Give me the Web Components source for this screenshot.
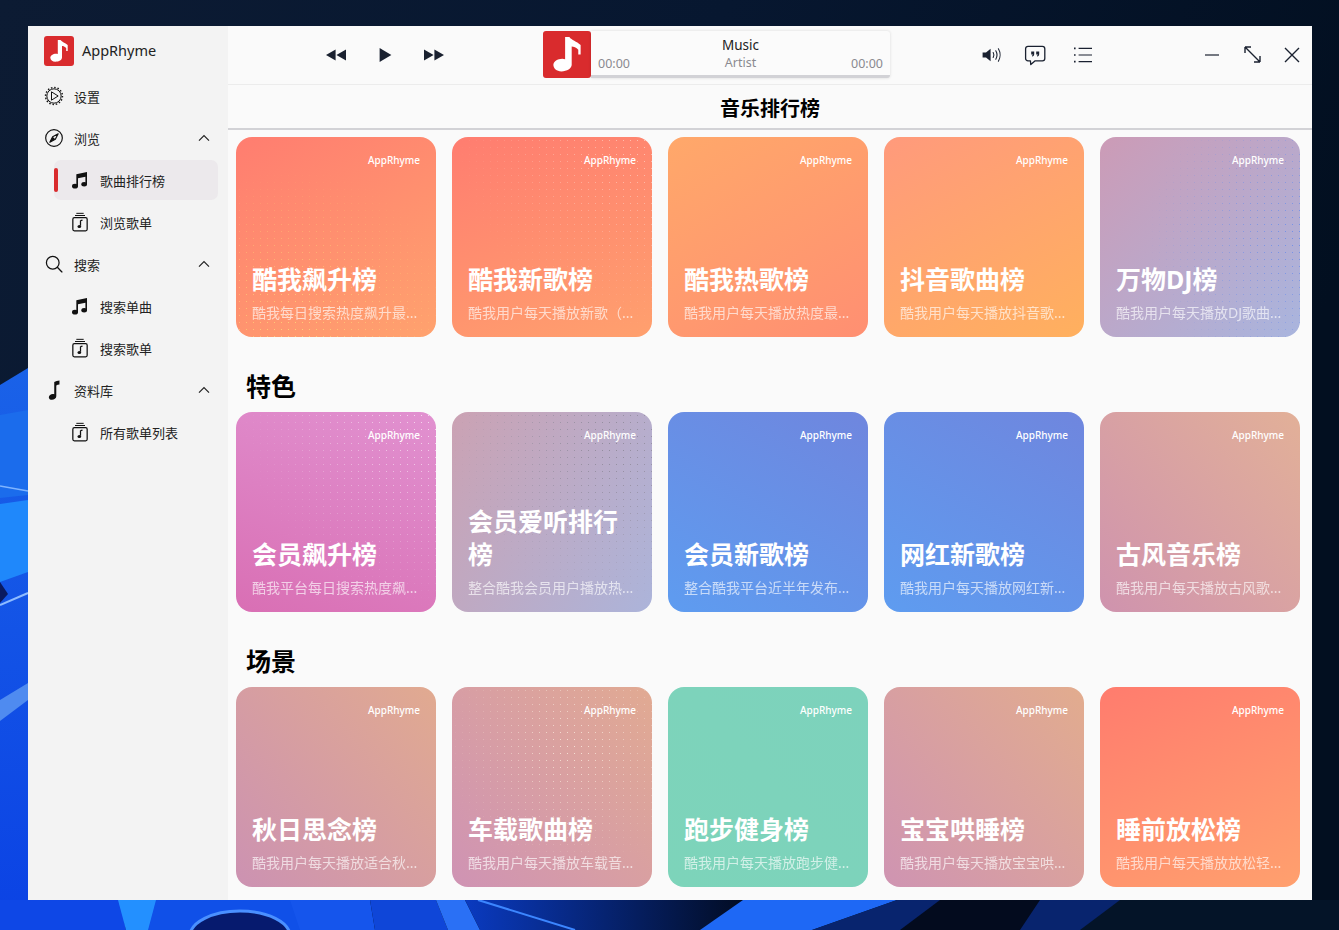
<!DOCTYPE html>
<html lang="zh">
<head>
<meta charset="utf-8">
<title>AppRhyme</title>
<style>
  html, body { margin: 0; height: 100%; }
  body {
    box-sizing: border-box;
    height: 930px;
    overflow: hidden;
    padding: 26px 27px 30px 28px;
    background: #0b1a32;
    font-family: "Noto Sans", "Noto Sans CJK SC", sans-serif;
  }
</style>
</head>
<body>
<desktop-wall></desktop-wall>
<app-window>
  <side-bar slot="side">
    <nav-item icon="gear">设置</nav-item>
    <nav-item icon="compass" chevron>浏览</nav-item>
    <nav-item icon="notes" sub active>歌曲排行榜</nav-item>
    <nav-item icon="playlist" sub>浏览歌单</nav-item>
    <nav-item icon="search" chevron>搜索</nav-item>
    <nav-item icon="notes" sub>搜索单曲</nav-item>
    <nav-item icon="playlist" sub>搜索歌单</nav-item>
    <nav-item icon="note" chevron>资料库</nav-item>
    <nav-item icon="playlist" sub>所有歌单列表</nav-item>
  </side-bar>
  <top-bar slot="top"></top-bar>
  <chart-page slot="main" heading="音乐排行榜">
    <chart-row>
      <chart-card from="#ff7d70" to="#ffa26e" angle="150" name="酷我飙升榜" desc="酷我每日搜索热度飙升最..." dot="#ffd27a" dotat="30% 100%"></chart-card>
      <chart-card from="#ff7d70" to="#ffa06e" angle="160" name="酷我新歌榜" desc="酷我用户每天播放新歌（..." dot="#ffc4b4" dotat="100% 0%"></chart-card>
      <chart-card from="#ffa86a" to="#ff8f72" angle="150" name="酷我热歌榜" desc="酷我用户每天播放热度最..."></chart-card>
      <chart-card from="#ff9a7c" to="#ffb05e" angle="150" name="抖音歌曲榜" desc="酷我用户每天播放抖音歌..."></chart-card>
      <chart-card from="#cc9bb6" to="#a9b5de" angle="135" name="万物DJ榜" desc="酷我用户每天播放DJ歌曲..." dot="#6f8fe8" dotat="100% 50%"></chart-card>
    </chart-row>
    <chart-row title="特色">
      <chart-card from="#d96fb4" to="#e191d0" angle="20" name="会员飙升榜" desc="酷我平台每日搜索热度飙..." dot="#f6dcf0" dotat="100% 0%"></chart-card>
      <chart-card from="#cba2b3" to="#acb4da" angle="120" name="会员爱听排行榜" desc="整合酷我会员用户播放热..." dot="#8f8a9a" dotat="80% 15%"></chart-card>
      <chart-card from="#5e9cf0" to="#6f86de" angle="30" name="会员新歌榜" desc="整合酷我平台近半年发布..."></chart-card>
      <chart-card from="#5e9cf0" to="#6f86de" angle="30" name="网红新歌榜" desc="酷我用户每天播放网红新..."></chart-card>
      <chart-card from="#cf93ae" to="#e2b098" angle="50" name="古风音乐榜" desc="酷我用户每天播放古风歌..."></chart-card>
    </chart-row>
    <chart-row title="场景">
      <chart-card from="#cc92b2" to="#e1aa90" angle="50" name="秋日思念榜" desc="酷我用户每天播放适合秋..."></chart-card>
      <chart-card from="#cf93b4" to="#e1aa92" angle="50" name="车载歌曲榜" desc="酷我用户每天播放车载音..." dot="#f6e2d6" dotat="60% 30%"></chart-card>
      <chart-card from="#7dd4ba" to="#7dd2bc" angle="50" name="跑步健身榜" desc="酷我用户每天播放跑步健..."></chart-card>
      <chart-card from="#cf94b2" to="#e2ac8e" angle="50" name="宝宝哄睡榜" desc="酷我用户每天播放宝宝哄..."></chart-card>
      <chart-card from="#ff7c6e" to="#ffa06e" angle="155" name="睡前放松榜" desc="酷我用户每天播放放松轻..."></chart-card>
    </chart-row>
  </chart-page>
</app-window>

<script>
const INK = '#1a2130';
const ICONS = {
  gear: `<circle cx="12" cy="12" r="10.2" fill="none" stroke="#111" stroke-width="1.7" stroke-dasharray="1.8 2.2"/>
    <circle cx="12" cy="12" r="8.6" fill="none" stroke="#111" stroke-width="1.2"/>
    <path d="M9 7 17 12 9 17Z" fill="none" stroke="#111" stroke-width="1.2" stroke-linejoin="round"/>`,
  compass: `<circle cx="12" cy="12" r="10" fill="none" stroke="#111" stroke-width="1.4"/>
    <path d="M17 7 13.6 13.6 7 17 10.4 10.4Z" fill="none" stroke="#111" stroke-width="1.4" stroke-linejoin="round"/>
    <path d="M7 17 10.4 10.4 13.6 13.6Z" fill="#111"/>`,
  search: `<circle cx="10.5" cy="10.5" r="7.6" fill="none" stroke="#111" stroke-width="1.5"/>
    <path d="M16 16 21.5 21.5" stroke="#111" stroke-width="1.6" stroke-linecap="round"/>`,
  note: `<path transform="translate(-1.6 -1.4) scale(1.12)" d="M12.4 3.4 C14 2.4 16 2 18 1.8 V6.2 C16.6 6.4 15.4 6.7 14.6 7.2 V18.6 C14.6 21 12.2 22.4 10 22.4 C8 22.4 6.6 21.3 6.6 19.6 C6.6 17.6 8.8 16.2 10.8 16.2 C11.4 16.2 11.9 16.3 12.4 16.5Z" fill="#111"/>`,
  notes: `<path d="M7.6 5 20.4 2.4V17h-1.9V8L9.6 9.8V19.6H7.6Z" fill="#111"/>
    <ellipse cx="6" cy="19.4" rx="3.6" ry="2.8" fill="#111"/>
    <ellipse cx="17" cy="17.2" rx="3.4" ry="2.7" fill="#111"/>`,
  playlist: `<rect x="3.4" y="6.8" width="17.2" height="15.8" rx="1.8" fill="none" stroke="#111" stroke-width="1.5"/>
    <path d="M6 4.2H18 M7.6 1.6H16.4" stroke="#111" stroke-width="1.2"/>
    <path d="M12.6 10.2V16.6 M12.6 10.4 15 9.8" stroke="#111" stroke-width="1.5" fill="none"/>
    <ellipse cx="11.2" cy="17.4" rx="2.2" ry="1.8" fill="#111"/>`,
  chevron: `<path d="M3 10.6 8 5.6 13 10.6" fill="none" stroke="#222" stroke-width="1.2"/>`,
  prev: `<path d="M11.6 6.6V17.4L2 12Z M22 6.6V17.4L12.4 12Z" fill="${INK}"/>`,
  play: `<path d="M6.6 5V19L18.4 12Z" fill="${INK}"/>`,
  next: `<path d="M2 6.6V17.4L11.6 12Z M12.4 6.6V17.4L22 12Z" fill="${INK}"/>`,
  volume: `<path d="M2.6 9.4H6L10.6 5.8V18.2L6 14.6H2.6Z" fill="${INK}"/>
    <path d="M13.2 9.6C14 11 14 13 13.2 14.4 M15.8 7.8C17.2 10.2 17.2 13.8 15.8 16.2 M18.4 5.8C20.6 9.4 20.6 14.6 18.4 18.2" fill="none" stroke="${INK}" stroke-width="1.1" stroke-linecap="round"/>`,
  comment: `<path d="M5 3.4H19.4C20.8 3.4 21.8 4.4 21.8 5.8V15.4C21.8 16.8 20.8 17.8 19.4 17.8H12.2L7.8 21.6 7.4 17.8H5C3.6 17.8 2.6 16.8 2.6 15.4V5.8C2.6 4.4 3.6 3.4 5 3.4Z" fill="none" stroke="${INK}" stroke-width="1.3" stroke-linejoin="round"/>
    <path d="M8.2 8.4h3v2.6c0 1.4-.7 2.2-2 2.6l-.4-.9c.7-.3 1-.6 1-1.1H8.2Z M13.2 8.4h3v2.6c0 1.4-.7 2.2-2 2.6l-.4-.9c.7-.3 1-.6 1-1.1H13.2Z" fill="${INK}"/>`,
  list: `<path d="M7.6 5.4H21 M7.6 12H21 M7.6 18.6H21" stroke="${INK}" stroke-width="1.2"/>
    <path d="M3 4.6h1.6v1.6H3Z M3 11.2h1.6v1.6H3Z M3 17.8h1.6v1.6H3Z" fill="${INK}"/>`,
  minimize: `<path d="M5 12H19" stroke="${INK}" stroke-width="1.2"/>`,
  maximize: `<path d="M5 4 20 19 M5 4V10 M5 4H11 M20 19V13 M20 19H14" fill="none" stroke="${INK}" stroke-width="1.4"/>`,
  close: `<path d="M5 5 19 19 M19 5 5 19" stroke="${INK}" stroke-width="1.4"/>`
};
const NOTE_LOGO = `<svg viewBox="0 0 100 100" width="100%" height="100%" style="display:block">
  <path d="M46 13H55C60 20 70 22 79 30V50H74V40C70 35 64 33 60 33V72C60 80 50 86 38 86C28 86 21 80 21 72C21 65 30 59 40 59C42 59 44 59.5 46 60Z" fill="#fff"/>
</svg>`;

class SvgIcon extends HTMLElement {
  connectedCallback() {
    const size = this.getAttribute('size') || 20;
    const box = this.getAttribute('name') === 'chevron' ? '0 0 16 16' : '0 0 24 24';
    this.attachShadow({ mode: 'open' });
    this.shadowRoot.innerHTML = `
      <style>:host { display: block; width: ${size}px; height: ${size}px; flex: none; } svg { display: block; }</style>
      <svg viewBox="${box}" width="${size}" height="${size}">${ICONS[this.getAttribute('name')]}</svg>`;
  }
}
customElements.define('svg-icon', SvgIcon);

class DesktopWall extends HTMLElement {
  connectedCallback() {
    this.attachShadow({ mode: 'open' });
    this.shadowRoot.innerHTML = `
      <style>:host { position: absolute; left: 0; top: 0; width: 1339px; height: 930px; } svg { display: block; }</style>
      <svg width="1339" height="930" viewBox="0 0 1339 930">
        <defs>
          <linearGradient id="night" x1="0" y1="0" x2="1" y2="0.3">
            <stop offset="0" stop-color="#0c1b33"/><stop offset="0.5" stop-color="#071730"/><stop offset="1" stop-color="#020f20"/>
          </linearGradient>
          <linearGradient id="left" x1="0" y1="0" x2="0" y2="1">
            <stop offset="0" stop-color="#1a62e8"/><stop offset="1" stop-color="#0b42e4"/>
          </linearGradient>
          <linearGradient id="shade" x1="0" y1="0" x2="1" y2="0">
            <stop offset="0" stop-color="#0a3ac0"/><stop offset="1" stop-color="#020c22"/>
          </linearGradient>
        </defs>
        <rect width="1339" height="930" fill="url(#night)"/>
        <path d="M0 385 28 368V930H0Z" fill="url(#left)"/>
        <path d="M0 504 28 500V572L0 582Z" fill="#1f88fb"/>
        <path d="M0 415 28 410V495L0 498Z" fill="#1b6cec"/>
        <path d="M0 486 28 491" stroke="#7fb4ff" stroke-width="1.5"/>
        <path d="M0 582 8 594 0 603Z" fill="#0a1a60"/>
        <path d="M0 605 28 593" stroke="#8fbcff" stroke-width="2"/>
        <path d="M0 700 28 683V700L0 721Z" fill="#4f8bf0"/>
        <path d="M0 900H1339V930H0Z" fill="#041428"/>
        <path d="M0 900H120L126 930H0Z" fill="#0e47e6"/>
        <path d="M118 900H158L150 930H126Z" fill="#2390ff"/>
        <path d="M156 900H300L368 930H148Z" fill="#1050e8"/>
        <ellipse cx="240" cy="936" rx="50" ry="25" fill="#061a6e" stroke="#4a90ff" stroke-width="3"/>
        <path d="M290 900H370L375 930H300Z" fill="#1555ec"/>
        <path d="M370 900H436L448 930H375Z" fill="#0f46d8"/>
        <path d="M436 900H465L480 930H448Z" fill="#2a70f5"/>
        <path d="M465 900H745L700 930H480Z" fill="url(#shade)"/>
        <path d="M478 900 575 930" stroke="#3c86ff" stroke-width="2"/>
        <path d="M743 900H897L812 930H700Z" fill="#1e68f5"/>
        <path d="M897 900H1120L1080 930H812Z" fill="#08246e"/>
        <path d="M940 900H1040L1020 930H900Z" fill="#030b1e"/>
      </svg>`;
  }
}
customElements.define('desktop-wall', DesktopWall);

class AppWindow extends HTMLElement {
  connectedCallback() {
    this.attachShadow({ mode: 'open' });
    this.shadowRoot.innerHTML = `
      <style>
        :host { position: relative; display: grid; grid-template-columns: 200px 1fr; width: 1284px; height: 874px; background: #fafafa; color: #1c1c1c; overflow: hidden; }
        .right { display: flex; flex-direction: column; min-width: 0; height: 874px; }
      </style>
      <slot name="side"></slot>
      <div class="right">
        <slot name="top"></slot>
        <slot name="main"></slot>
      </div>`;
  }
}
customElements.define('app-window', AppWindow);

class SideBar extends HTMLElement {
  connectedCallback() {
    this.attachShadow({ mode: 'open' });
    this.shadowRoot.innerHTML = `
      <style>
        :host { display: block; background: #f3f3f3; }
        .brand { display: flex; align-items: center; gap: 8px; height: 50px; padding-left: 16px; font-size: 14.5px; color: #222; }
        .brand span { padding-bottom: 2px; }
        .logo { width: 30px; height: 30px; background: #d92b2d; border-radius: 3px; }
        nav { display: flex; flex-direction: column; gap: 2px; padding: 0 10px; }
      </style>
      <div class="brand"><div class="logo">${NOTE_LOGO}</div><span>AppRhyme</span></div>
      <nav><slot></slot></nav>`;
  }
}
customElements.define('side-bar', SideBar);

class NavItem extends HTMLElement {
  connectedCallback() {
    const chev = this.hasAttribute('chevron') ? '<svg-icon name="chevron" size="16" class="chev"></svg-icon>' : '';
    this.attachShadow({ mode: 'open' });
    this.shadowRoot.innerHTML = `
      <style>
        :host { position: relative; display: flex; align-items: center; gap: 10px; height: 40px; padding: 0 6px; font-size: 13px; color: #222; border-radius: 7px; }
        :host([sub]) { margin-left: 16px; padding-left: 16px; }
        :host([active]) { background: #ece9ec; }
        :host([active])::before { content: ""; position: absolute; left: 0; top: 8px; width: 4px; height: 24px; border-radius: 2px; background: #d92b2d; }
        .chev { margin-left: auto; }
      </style>
      <svg-icon name="${this.getAttribute('icon')}" size="20"></svg-icon>
      <span><slot></slot></span>
      ${chev}`;
  }
}
customElements.define('nav-item', NavItem);

class TopBar extends HTMLElement {
  connectedCallback() {
    this.attachShadow({ mode: 'open' });
    this.shadowRoot.innerHTML = `
      <style>
        :host { display: flex; align-items: center; height: 58px; flex: none; border-bottom: 1px solid #ececec; padding-right: 8px; }
        .group { display: flex; align-items: center; }
        .transport { margin-left: 96px; gap: 25px; }
        .tools { margin-left: 90px; gap: 19px; }
        .tools svg-icon:last-child { margin-left: 5px; }
        .win { margin-left: auto; gap: 16px; }
        .player { display: flex; width: 347px; height: 47px; margin: -1px 0 0 97px; }
        .cover { width: 48px; height: 47px; background: #d92b2d; border-radius: 3px; flex: none; }
        .track { position: relative; flex: 1; display: flex; flex-direction: column; align-items: center; background: #fbfbfb; border-bottom: 3px solid #d2d2d6; box-shadow: 0 0 3px rgba(0,0,0,.14); border-radius: 0 3px 3px 0; box-sizing: border-box; padding-top: 6px; font-size: 13px; line-height: 17px; }
        .name { font-size: 13.5px; color: #222; }
        .artist { color: #8a8a90; font-size: 12.5px; }
        .time { position: absolute; bottom: 3px; color: #8a8a90; font-size: 12.5px; }
        .start { left: 7px; }
        .end { right: 7px; }
      </style>
      <div class="group transport">
        <svg-icon name="prev" size="24"></svg-icon>
        <svg-icon name="play" size="24"></svg-icon>
        <svg-icon name="next" size="24"></svg-icon>
      </div>
      <div class="player">
        <div class="cover">${NOTE_LOGO}</div>
        <div class="track">
          <span class="name">Music</span>
          <span class="artist">Artist</span>
          <span class="time start">00:00</span>
          <span class="time end">00:00</span>
        </div>
      </div>
      <div class="group tools">
        <svg-icon name="volume" size="24"></svg-icon>
        <svg-icon name="comment" size="24"></svg-icon>
        <svg-icon name="list" size="24"></svg-icon>
      </div>
      <div class="group win">
        <svg-icon name="minimize" size="24"></svg-icon>
        <svg-icon name="maximize" size="24"></svg-icon>
        <svg-icon name="close" size="24"></svg-icon>
      </div>`;
  }
}
customElements.define('top-bar', TopBar);

class ChartPage extends HTMLElement {
  connectedCallback() {
    this.attachShadow({ mode: 'open' });
    this.shadowRoot.innerHTML = `
      <style>
        :host { display: flex; flex-direction: column; flex: 1; min-height: 0; overflow: hidden; }
        h1 { margin: 0; height: 43px; line-height: 47px; flex: none; text-align: center; font-size: 20px; font-weight: 700; color: #000; border-bottom: 2px solid #d2d2d6; }
        .body { padding: 7px 12px 0 8px; }
      </style>
      <h1>${this.getAttribute('heading')}</h1>
      <div class="body"><slot></slot></div>`;
  }
}
customElements.define('chart-page', ChartPage);

class ChartRow extends HTMLElement {
  connectedCallback() {
    const title = this.getAttribute('title');
    this.removeAttribute('title');
    this.attachShadow({ mode: 'open' });
    this.shadowRoot.innerHTML = `
      <style>
        :host { display: block; }
        h2 { margin: 0; padding: 33px 0 9px 10px; font-size: 25px; line-height: 33px; font-weight: 700; color: #000; }
        .grid { display: grid; grid-template-columns: repeat(5, 200px); gap: 16px; }
      </style>
      ${title ? `<h2>${title}</h2>` : ''}
      <div class="grid"><slot></slot></div>`;
  }
}
customElements.define('chart-row', ChartRow);

class ChartCard extends HTMLElement {
  connectedCallback() {
    const a = n => this.getAttribute(n);
    const dots = a('dot') ? `<div class="dots" style="--dot:${a('dot')};--at:${a('dotat')}"></div>` : '';
    this.attachShadow({ mode: 'open' });
    this.shadowRoot.innerHTML = `
      <style>
        :host { position: relative; display: flex; flex-direction: column; box-sizing: border-box; width: 200px; height: 200px; padding: 16px 16px 14px; border-radius: 16px; color: #fff; background: linear-gradient(${a('angle')}deg, ${a('from')}, ${a('to')}); overflow: hidden; }
        .dots { position: absolute; inset: 0; background-image: radial-gradient(circle, var(--dot) .6px, transparent 1px); background-size: 7px 7px; -webkit-mask-image: radial-gradient(circle at var(--at), #000, transparent 70%); mask-image: radial-gradient(circle at var(--at), #000, transparent 70%); }
        .brand { position: relative; align-self: flex-end; font-size: 10px; line-height: 14px; font-weight: 500; }
        .name { position: relative; margin-top: auto; font-size: 25px; line-height: 33px; font-weight: 700; }
        .desc { position: relative; margin-top: 7px; font-size: 14px; line-height: 20px; opacity: .65; white-space: nowrap; }
      </style>
      ${dots}
      <div class="brand">AppRhyme</div>
      <div class="name">${a('name')}</div>
      <div class="desc">${a('desc')}</div>`;
  }
}
customElements.define('chart-card', ChartCard);
</script>
</body>
</html>
